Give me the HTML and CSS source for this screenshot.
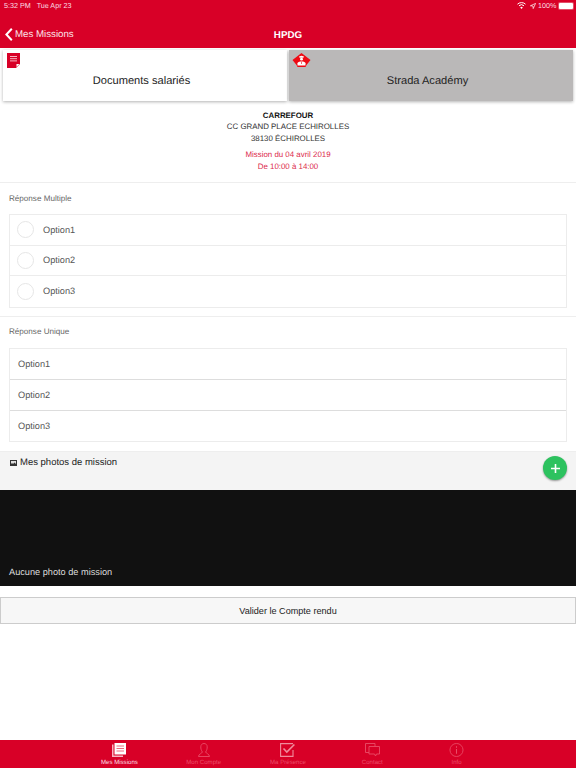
FILE: index.html

```html
<!DOCTYPE html>
<html lang="fr">
<head>
    <meta charset="UTF-8">
    <meta name="viewport" content="width=device-width, initial-scale=1.0">
    <title>HPDG</title>
    <link rel="stylesheet" href="styles.css">
</head>
<body>
    <div class="app">
        <header class="header">
            <div class="status-bar">
                <span>5:32 PM&nbsp;&nbsp; Tue Apr 23</span>
                <div class="status-right">
                    <svg width="9" height="7" viewBox="0 0 9 7" fill="none" stroke="#fff" stroke-width="1"><path d="M0.5 2.2 A5.8 5.8 0 0 1 8.5 2.2"/><path d="M2 3.8 A3.6 3.6 0 0 1 7 3.8"/><path d="M4.5 7 L3.2 5.4 A1.9 1.9 0 0 1 5.8 5.4 Z" fill="#fff" stroke="none"/></svg>
                    <svg class="status-arrow" width="6" height="6" viewBox="0 0 6 6"><path d="M5.6 0.4 L0.4 2.8 L3 3 L3.2 5.6 Z" fill="none" stroke="#fff" stroke-width="0.7"/></svg>
                    <span>100%</span>
                    <div class="battery"></div>
                </div>
            </div>
            <div class="nav-bar">
                <a class="back-link">
                    <svg width="8" height="13" viewBox="0 0 8 13"><path d="M6.8 0.8 L1.4 6.5 L6.8 12.2" fill="none" stroke="#fff" stroke-width="2"/></svg>
                    Mes Missions
                </a>
                <span class="nav-title">HPDG</span>
            </div>
        </header>

        <div class="tiles">
            <div class="tile">
                <svg class="tile-icon doc-icon" width="13" height="15" viewBox="0 0 13 15">
                    <path d="M0 0 H13 V11 L9 15 H0 Z" fill="#d80027"/>
                    <path d="M3 3.5 H10 M3 5.7 H10 M3 7.9 H10" stroke="#f7b5c2" stroke-width="1"/>
                    <path d="M9.5 14 L12.5 11 H9.5 Z" fill="#fff"/>
                </svg>
                <span>Documents salariés</span>
            </div>
            <div class="tile tile-grey">
                <svg class="tile-icon academy-icon" width="19" height="14" viewBox="0 0 19 14">
                    <path d="M9.5 0 L18.5 7 L14.5 12 L13.5 14 H5.5 L4.5 12 L0.5 7 Z" fill="#ee0a14"/>
                    <path d="M7 3.6 L9.5 2.8 L12 3.6 L11.4 4.8 H7.6 Z" fill="#fff"/>
                    <circle cx="9.5" cy="6.2" r="1.4" fill="#fff"/>
                    <path d="M5.5 12.6 V10.2 C5.5 8.9 7.5 8.4 9.5 8.4 C11.5 8.4 13.5 8.9 13.5 10.2 V12.6 Z" fill="#fff"/>
                    <path d="M9.5 8.8 V11" stroke="#ee0a14" stroke-width="0.6"/>
                </svg>
                <span>Strada Académy</span>
            </div>
        </div>

        <section class="mission-info">
            <p class="client">CARREFOUR</p>
            <p>CC GRAND PLACE ECHIROLLES</p>
            <p>38130 ÉCHIROLLES</p>
            <p class="mission-date">Mission du 04 avril 2019</p>
            <p class="mission-hours">De 10:00 à 14:00</p>
        </section>

        <section class="question">
            <h2>Réponse Multiple</h2>
            <ul class="options">
                <li class="option"><span class="radio"></span>Option1</li>
                <li class="option"><span class="radio"></span>Option2</li>
                <li class="option"><span class="radio"></span>Option3</li>
            </ul>
        </section>

        <section class="question question-single">
            <h2>Réponse Unique</h2>
            <ul class="options options-single">
                <li class="option">Option1</li>
                <li class="option">Option2</li>
                <li class="option">Option3</li>
            </ul>
        </section>

        <section class="photos">
            <div class="photos-head">
                <svg width="7" height="6" viewBox="0 0 7 6"><path d="M0 0 H7 V6 H0 Z" fill="#333"/><path d="M1 1 H6 V4 L4.5 2.5 L3 4 L2 3 L1 4 Z" fill="#ddd"/></svg>
                <span>Mes photos de mission</span>
                <button class="add-btn" aria-label="Ajouter">
                    <svg width="11" height="11" viewBox="0 0 11 11"><path d="M5.5 1 V10 M1 5.5 H10" stroke="#fff" stroke-width="1.6"/></svg>
                </button>
            </div>
            <div class="photos-empty">Aucune photo de mission</div>
        </section>

        <button class="submit-btn">Valider le Compte rendu</button>

        <nav class="tab-bar">
            <a class="tab tab-active">
                <svg width="14" height="14" viewBox="0 0 14 14"><path d="M0 1.5 H1.5 V12.5 H11 V14 H0 Z" fill="#f7b5c2"/><path d="M2.5 0 H14 V11.5 H2.5 Z" fill="#fff"/><path d="M4.5 3 H12 M4.5 5.5 H12 M4.5 8 H12" stroke="#ee6a80" stroke-width="1"/></svg>
                Mes Missions
            </a>
            <a class="tab">
                <svg width="12" height="14" viewBox="0 0 12 14" fill="none" stroke="#ea4d68" stroke-width="0.9"><path d="M0.5 13.5 H11.5 C11.5 11 8 10.5 7.6 9 C9 7 9.2 5.5 9.2 3.8 C9.2 1.8 7.8 0.5 6 0.5 C4.2 0.5 2.8 1.8 2.8 3.8 C2.8 5.5 3 7 4.4 9 C4 10.5 0.5 11 0.5 13.5 Z"/></svg>
                Mon Compte
            </a>
            <a class="tab">
                <svg width="15" height="14" viewBox="0 0 15 14" fill="none" stroke="#f08a9c" stroke-width="1.1"><path d="M13 7 V13.4 H0.6 V0.6 H13"/><path d="M3.5 5.5 L6.8 9 L14.4 1.5" stroke-width="1.6"/></svg>
                Ma Présence
            </a>
            <a class="tab">
                <svg width="15" height="14" viewBox="0 0 15 14" fill="none" stroke="#ea4d68" stroke-width="0.9"><path d="M4 9.5 H0.5 V0.5 H10 V3.5"/><path d="M4 3.5 H14.5 V11 H11.5 L10.5 13 L9.5 11 H4 Z"/></svg>
                Contact
            </a>
            <a class="tab">
                <svg width="15" height="14" viewBox="0 0 15 15" fill="none" stroke="#ea4d68" stroke-width="0.9"><circle cx="7.5" cy="7.5" r="7"/><path d="M7.5 6.5 V11.5 M7.5 3.5 V5" stroke-width="1.1"/></svg>
                Info
            </a>
        </nav>
    </div>
</body>
</html>
```

FILE: styles.css

```css
* {
    box-sizing: border-box;
}
html, body {
    margin: 0;
    padding: 0;
}
body {
    font-family: "Liberation Sans", Arial, sans-serif;
    background: white;
    color: #333;
    text-rendering: geometricPrecision;
}
p, h2, ul {
    margin: 0;
    padding: 0;
}
ul {
    list-style: none;
}
.app {
    display: flex;
    flex-direction: column;
    width: 576px;
    height: 768px;
    overflow: hidden;
}
.header {
    height: 48px;
    background-color: #d80027;
    color: white;
    flex-shrink: 0;
}
.status-bar {
    display: flex;
    justify-content: space-between;
    align-items: center;
    height: 11px;
    padding: 0 3px 0 4px;
    font-size: 7.2px;
    color: #fbdde3;
}
.status-right {
    display: flex;
    align-items: center;
    gap: 2.5px;
}
.status-arrow {
    margin-left: 1px;
}
.battery {
    width: 14px;
    height: 6px;
    background: white;
    border-radius: 1px;
    box-shadow: 0 0 0 1px rgba(255,255,255,0.3);
}
.nav-bar {
    position: relative;
    display: flex;
    justify-content: center;
    align-items: center;
    height: 37px;
    padding-top: 11px;
}
.back-link {
    position: absolute;
    left: 5px;
    top: 17px;
    display: flex;
    align-items: center;
    gap: 2px;
    font-size: 9.7px;
    color: #fbe3e8;
}
.nav-title {
    font-size: 9.8px;
    font-weight: bold;
}
.tiles {
    display: flex;
    gap: 2px;
    padding: 2px 3px 0;
    height: 53px;
    flex-shrink: 0;
}
.tile {
    position: relative;
    flex: 1;
    display: flex;
    justify-content: center;
    align-items: center;
    padding: 10px 7px 0 0;
    background: white;
    color: #222;
    font-size: 11.1px;
    box-shadow: 0 1px 3px rgba(0,0,0,0.3);
}
.tile-grey {
    background-color: #bab8b8;
}
.tile-icon {
    position: absolute;
}
.doc-icon {
    left: 4px;
    top: 3px;
}
.academy-icon {
    left: 3px;
    top: 3px;
}
.mission-info {
    height: 82px;
    flex-shrink: 0;
    padding-top: 9px;
    text-align: center;
    font-size: 7.9px;
    line-height: 11.3px;
    color: #333;
    border-bottom: 1px solid #eee;
}
.client {
    font-weight: bold;
    color: #111;
}
.mission-date {
    margin-top: 5.5px;
    color: #dc2a4c;
}
.mission-hours {
    color: #dc2a4c;
}
.question {
    height: 134px;
    flex-shrink: 0;
    padding: 10px 9px 0;
    border-bottom: 1px solid #eee;
}
.question h2 {
    height: 21px;
    font-size: 8.1px;
    font-weight: normal;
    line-height: 11px;
    color: #666;
}
.options {
    border: 1px solid #ececec;
}
.option {
    display: flex;
    align-items: center;
    height: 30.6px;
    padding-left: 7px;
    font-size: 9.2px;
    color: #555;
    border-bottom: 1px solid #ececec;
}
.option:last-child {
    border-bottom: none;
}
.radio {
    width: 17px;
    height: 17px;
    margin-right: 9px;
    border: 1px solid #e6e6e6;
    border-radius: 50%;
}
.question-single {
    height: 134px;
    padding-top: 9px;
    border-bottom: none;
}
.question-single h2 {
    height: 22px;
}
.options-single .option {
    height: 30.8px;
    padding-left: 8px;
    border-bottom-color: #ddd;
}
.photos {
    flex-shrink: 0;
}
.photos-head {
    position: relative;
    display: flex;
    align-items: flex-start;
    gap: 3px;
    height: 39px;
    padding: 5px 9px 0 10px;
    background-color: #f4f4f4;
    border-top: 1px solid #eee;
    font-size: 9.5px;
    color: #222;
}
.photos-head svg {
    margin-top: 3px;
}
.add-btn {
    position: absolute;
    right: 9px;
    top: 4px;
    display: flex;
    justify-content: center;
    align-items: center;
    width: 24px;
    height: 24px;
    padding: 0;
    background-color: #2dc25f;
    border: none;
    border-radius: 50%;
    box-shadow: 0 1px 2px rgba(0,0,0,0.4);
}
.add-btn svg {
    margin-top: 0;
}
.photos-empty {
    display: flex;
    align-items: flex-end;
    height: 96px;
    padding: 0 9px 9px;
    background-color: #111;
    color: #ddd;
    font-size: 9.2px;
}
.submit-btn {
    display: block;
    width: 576px;
    height: 27px;
    margin-top: 11px;
    flex-shrink: 0;
    background-color: #f7f7f7;
    color: #222;
    border: 1px solid #ccc;
    font-family: inherit;
    font-size: 9.1px;
}
.tab-bar {
    display: flex;
    justify-content: center;
    margin-top: auto;
    height: 28px;
    flex-shrink: 0;
    background-color: #d80027;
}
.tab {
    display: flex;
    flex-direction: column;
    align-items: center;
    width: 84.3px;
    padding-top: 3px;
    gap: 2px;
    font-size: 6.1px;
    color: #ea4d68;
}
.tab-active {
    color: #fbdde3;
}
```
